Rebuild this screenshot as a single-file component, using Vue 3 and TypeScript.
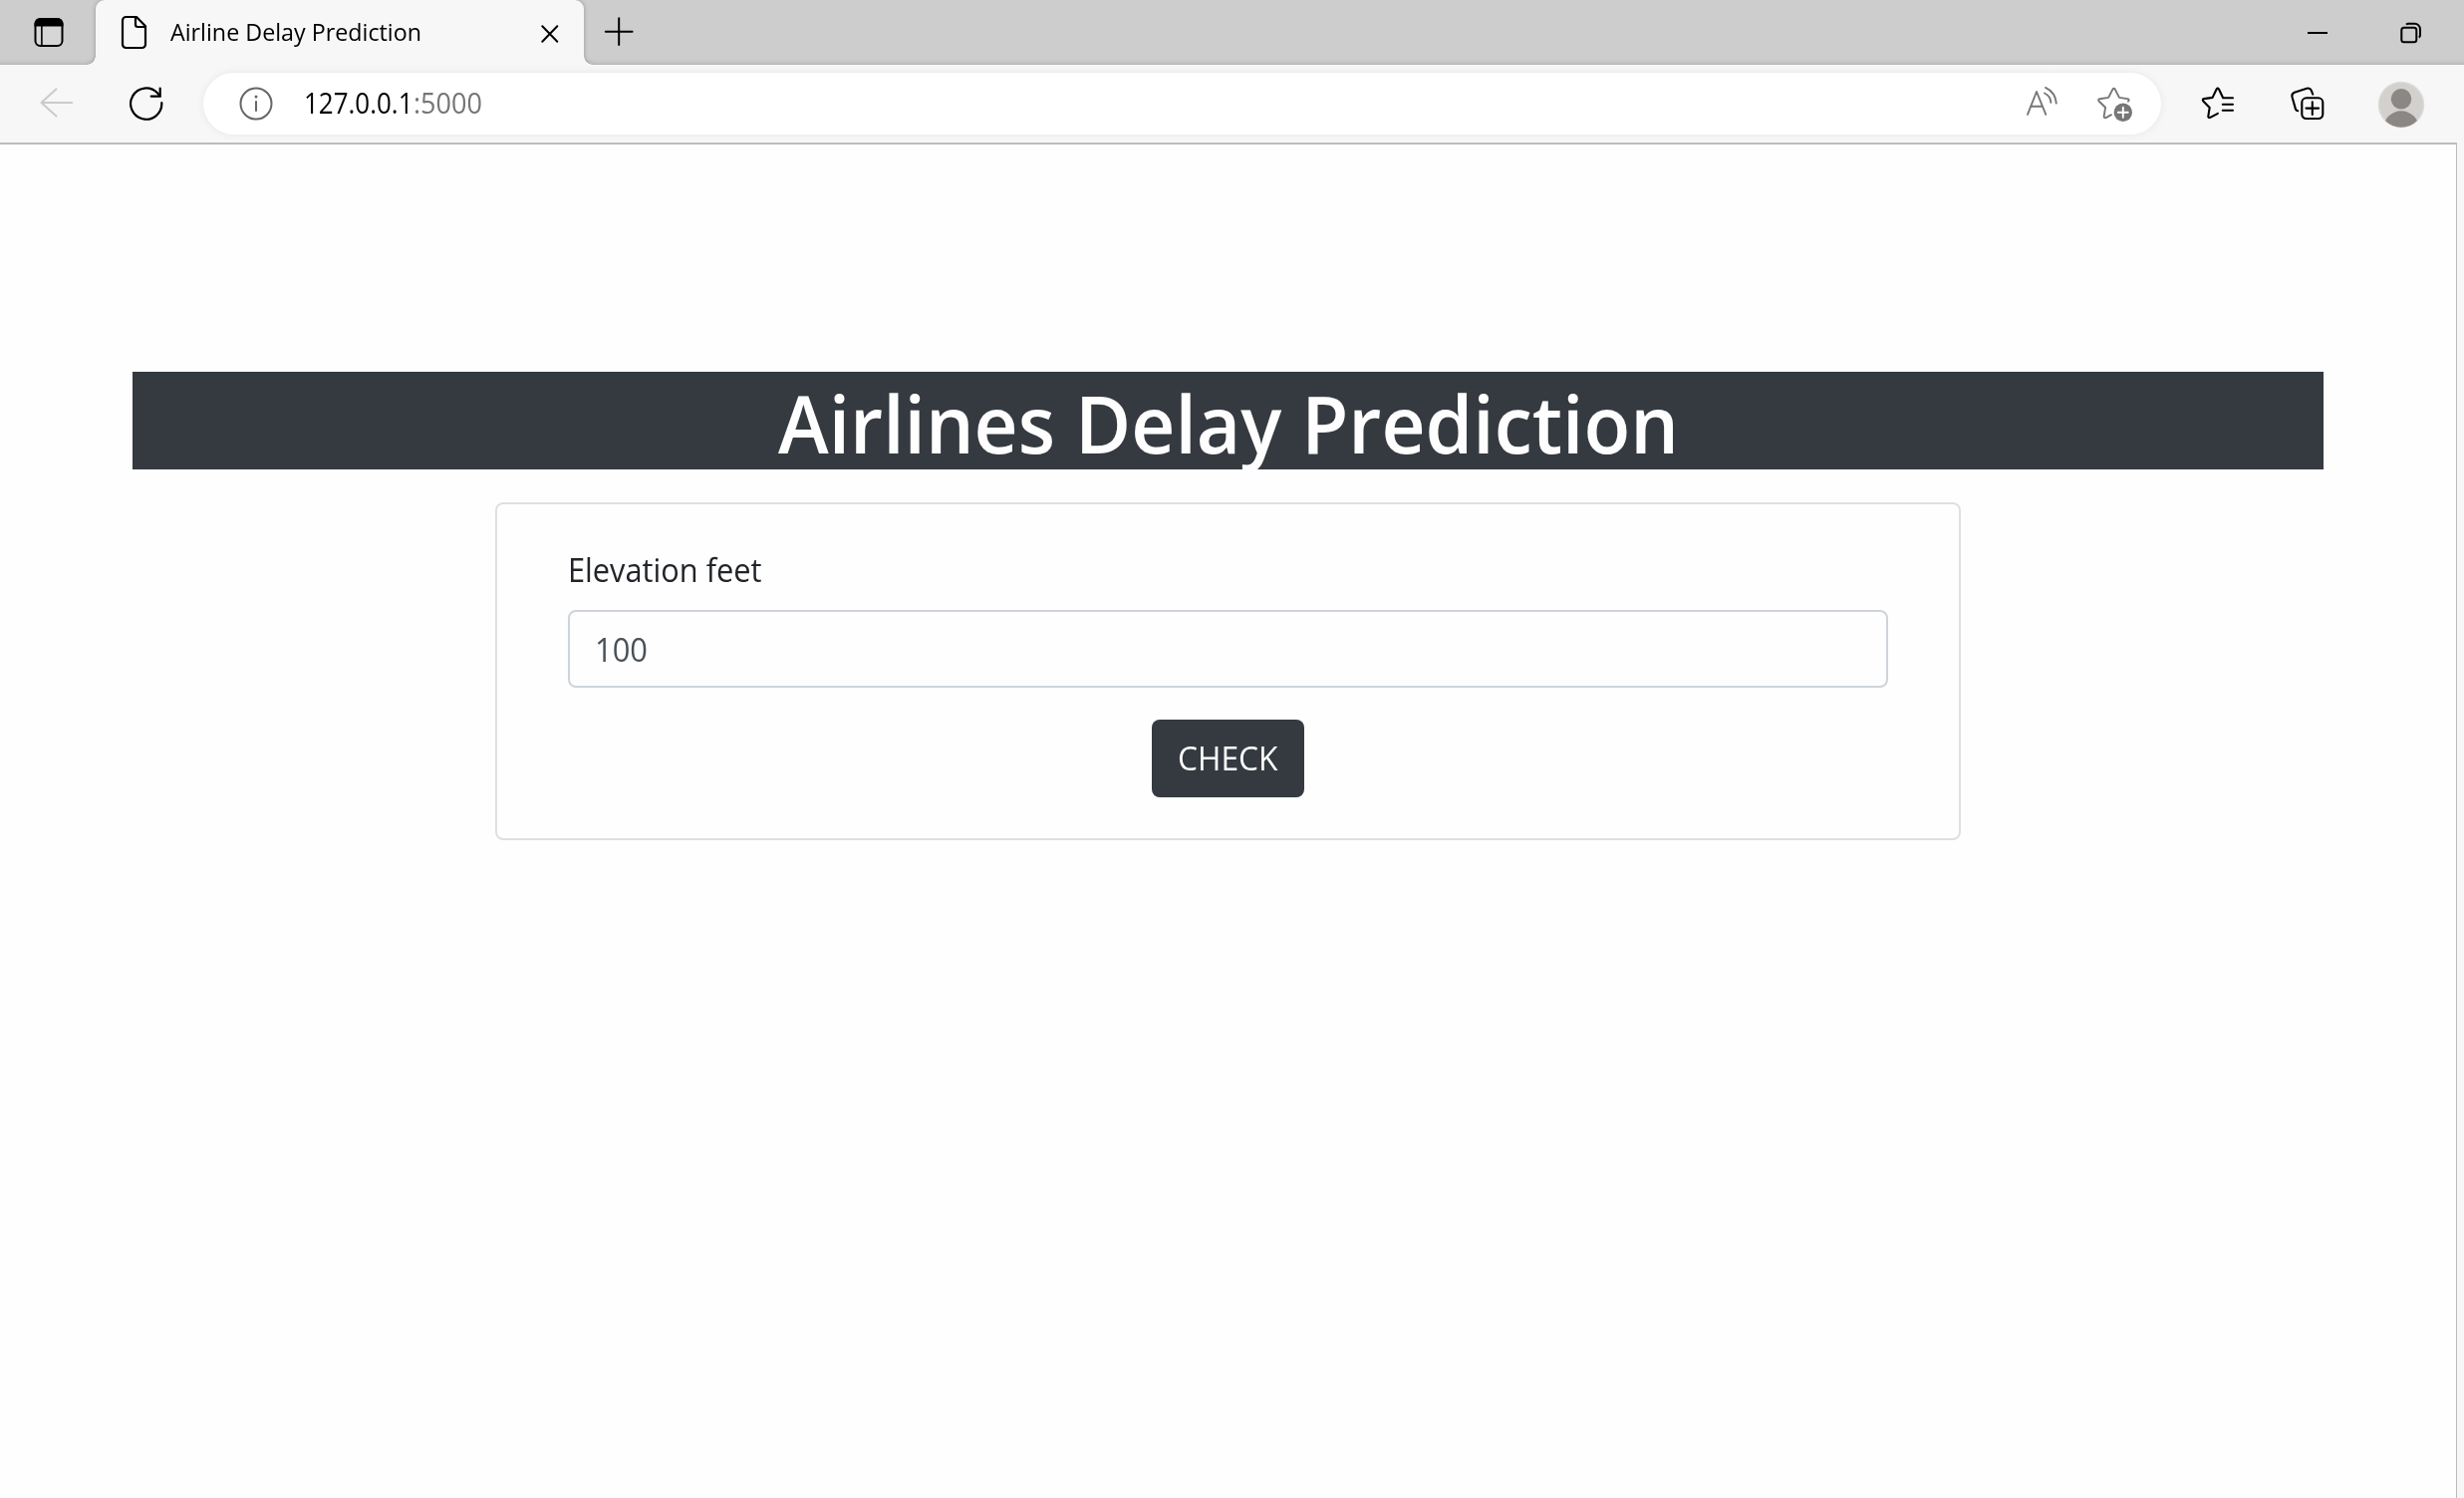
<script setup lang="ts">
import { ref } from 'vue'

const tabTitle = 'Airline Delay Prediction'
const host = '127.0.0.1'
const port = ':5000'
const elevation = ref('100')

// Condenses a run of text horizontally so that it takes up the given width.
const vFit = {
  mounted(el: HTMLElement, binding: { value: number }) {
    const natural = el.getBoundingClientRect().width
    el.style.transform = `scaleX(${binding.value / natural})`
    el.style.marginRight = `${binding.value - natural}px`
  },
}
</script>

<template>
  <div class="browser">
    <header class="strip">
      <svg class="i-workspace" width="32" height="32" viewBox="33 16 32 32" fill="none" stroke="#000" stroke-width="2">
        <rect x="35.500" y="19" width="27" height="27" rx="5" fill="#d6d6d6" />
        <path d="M35.500 25.500v-2a5 5 0 0 1 5-4.500h17a5 5 0 0 1 5 4.500v2z" fill="#000" />
        <path d="M41.900 26v20" stroke-width="1.600" />
      </svg>
      <div class="tab">
        <svg class="i-doc" width="28" height="36" viewBox="120 15 28 36" fill="none" stroke="#000" stroke-width="2.200" stroke-linejoin="round">
          <path d="M126.500 17h10.500l9 9.200v18.300a3.500 3.500 0 0 1-3.500 3.500h-16a3.500 3.500 0 0 1-3.500-3.500v-24a3.500 3.500 0 0 1 3.500-3.500z" />
          <path d="M136 17.500v7.300a2.200 2.200 0 0 0 2.200 2.200H145.500" />
        </svg>
        <span class="tab-title"><span v-fit="252" class="run">{{ tabTitle }}</span></span>
        <svg class="i-close" width="20" height="20" viewBox="542 23.700 20 20" fill="none" stroke="#000" stroke-width="2" stroke-linecap="round">
          <path d="M544.300 26l15 15.500M559.300 26l-15 15.500" />
        </svg>
      </div>
      <svg class="i-plus" width="30" height="30" viewBox="606 17 30 30" fill="none" stroke="#000" stroke-width="2" stroke-linecap="round">
        <path d="M607.800 31.700h26.800M621.200 18.300v26.800" />
      </svg>
      <svg class="i-min" width="22" height="22" viewBox="2315 22 22 22" fill="none" stroke="#000" stroke-width="2">
        <path d="M2316 33h20" />
      </svg>
      <svg class="i-restore" width="24" height="24" viewBox="2408 21 24 24" fill="none" stroke="#000" stroke-width="2">
        <rect x="2410.300" y="27.800" width="15" height="14.400" rx="2.500" />
        <path d="M2415 24.600q.8-.800 2-.800h6.500a5.500 5.500 0 0 1 5.500 5.500v6q0 1.500-1.200 2.300" />
      </svg>
    </header>

    <nav class="toolbar">
      <svg class="i-back" width="36" height="32" viewBox="39 87 36 32" fill="none" stroke="#cbcbcb" stroke-width="2" stroke-linecap="round" stroke-linejoin="round">
        <path d="M72.300 103H41.500M56.500 89.300L41.500 103l15 13.500" />
      </svg>
      <svg class="i-reload" width="36" height="36" viewBox="129 86 36 36" fill="none" stroke="#000" stroke-width="2.200" stroke-linecap="round">
        <path d="M162.300 103.200a15.600 15.600 0 1 1-4.300-9.900L160.300 96" />
        <path d="M160.700 88.500V96.700h-9" stroke-linejoin="miter" />
      </svg>
      <div class="address">
        <svg class="i-info" width="36" height="36" viewBox="239 85.500 36 36" fill="none" stroke="#666" stroke-width="2">
          <circle cx="257" cy="103.500" r="15.500" />
          <path d="M257 100.800v10.500" stroke-width="2" />
          <circle cx="257" cy="96.500" r="1.500" fill="#666" stroke="none" />
        </svg>
        <span class="url"><span v-fit="109.500" class="run">{{ host }}</span><span v-fit="69" class="run port">{{ port }}</span></span>
        <svg class="i-read" width="36" height="36" viewBox="2032 84 36 36" fill="none" stroke="#767676" stroke-width="1.900" stroke-linecap="round" stroke-linejoin="round">
          <path d="M2035 114.800l9-22.800 9.300 22.800M2038 106.800h12" />
          <path d="M2052 93.500q5.800 2.500 6.400 9.400M2053 87.900q10 4.800 10.800 15.700" />
        </svg>
        <svg class="i-addfav" width="38" height="38" viewBox="2104 85 38 38" fill="none" stroke="#767676" stroke-width="1.900" stroke-linecap="round" stroke-linejoin="round">
          <path d="M2136 101.700q1.800-2-.8-2.600l-8.200-1.200-4.200-8.300q-1.200-1.700-2.400 0l-4.200 8.300-8.900 1.300q-2 .7-.7 2.300l6.500 6.300-1.500 9q0 1.800 2 1.300l5.400-2.900" />
          <circle cx="2130.800" cy="112.700" r="9.200" fill="#767676" stroke="none" />
          <path d="M2130.800 107.700v10M2125.800 112.700h10" stroke="#fff" />
        </svg>
      </div>
      <svg class="i-fav" width="36" height="36" viewBox="2208 86 36 36" fill="none" stroke="#000" stroke-width="2.100" stroke-linecap="round" stroke-linejoin="round">
        <path d="M2241 98.300h-9.800l-4.200-8.800q-1.200-1.800-2.400 0l-4 8.400-8.600 1.200q-2 .6-.7 2.300l6.400 6.500-1.400 8.800q0 1.800 2 1.200l7.600-4.100" />
        <path d="M2230.800 104.700h10.200M2230.800 110.800h10.200" />
      </svg>
      <svg class="i-coll" width="38" height="38" viewBox="2297 85 38 38" fill="none" stroke="#000" stroke-width="2.100" stroke-linecap="round">
        <path d="M2306.300 111.200q-1.800 0-2.500-2.300l-3.300-11.600q-.8-3.500 2.300-4.600l12.300-3.900q3.300-1 4.700 2l1.500 3.800" />
        <rect x="2310.300" y="98.300" width="21" height="20.700" rx="4.500" />
        <path d="M2314.500 108.600h12.600M2320.800 102.300v12.600" />
      </svg>
      <svg class="i-user" width="48" height="48" viewBox="2385.500 80.500 48 48">
        <defs><clipPath id="face"><circle cx="2409.500" cy="104.500" r="22.700" /></clipPath></defs>
        <circle cx="2409.500" cy="104.500" r="23.300" fill="#dedddb" />
        <circle cx="2409.500" cy="104.500" r="22" fill="#d2d1cd" />
        <g clip-path="url(#face)" fill="#8b8785">
          <circle cx="2409.500" cy="98.700" r="10.300" />
          <circle cx="2409.500" cy="128.800" r="18" />
        </g>
      </svg>
    </nav>

    <main class="page">
      <h1 class="banner"><span v-fit="904" class="run">Airlines Delay Prediction</span></h1>
      <form class="card" @submit.prevent>
        <label class="label" for="elevation"><span v-fit="194.500" class="run">Elevation feet</span></label>
        <div id="elevation" class="field"><span v-fit="53" class="run">{{ elevation }}</span></div>
        <button class="check" type="submit"><span v-fit="100.500" class="run">CHECK</span></button>
      </form>
    </main>
  </div>
</template>

<style>
html,
body {
  margin: 0;
  background: #f7f7f7;
  overflow: hidden;
}
</style>

<style scoped>
.browser {
  display: flex;
  flex-direction: column;
  width: 2473px;
  height: 1503px;
  background: #f7f7f7;
  font-family: "Open Sans", "Noto Sans", sans-serif;
  color: #000;
}
svg {
  display: block;
  flex: none;
}
.run {
  display: inline-block;
  white-space: nowrap;
  transform-origin: 0 50%;
}
.strip {
  display: flex;
  height: 65px;
  overflow: hidden;
  background: linear-gradient(to top, #b6b6b6 0, #c5c5c5 2px, #cdcdcd 6px);
}
.i-workspace { margin: 16px 31px 0 33px; }
.tab {
  position: relative;
  display: flex;
  flex: none;
  width: 490px;
  height: 65px;
  background: #f7f7f7;
  border-radius: 9px 9px 0 0;
  filter: drop-shadow(0 0 2px rgba(0, 0, 0, 0.28));
}
.tab::before,
.tab::after {
  content: "";
  position: absolute;
  bottom: 0;
  width: 9px;
  height: 9px;
}
.tab::before {
  left: -9px;
  background: radial-gradient(circle at 0 0, transparent 8.500px, #f7f7f7 9px);
}
.tab::after {
  right: -9px;
  background: radial-gradient(circle at 100% 0, transparent 8.500px, #f7f7f7 9px);
}
.i-doc { margin: 15px 0 0 24px; }
.tab-title {
  width: 371px;
  margin-left: 23px;
  font-size: 23.500px;
  line-height: 65px;
}
.i-close { margin-top: 24px; }
.i-plus { margin: 17px 0 0 20px; }
.i-min { margin: 22px 71px 0 auto; }
.i-restore { margin: 21px 41px 0 0; }

.toolbar {
  display: flex;
  height: 78px;
  border-bottom: 2px solid #bcbcbc;
  margin-right: 7px;
}
.i-back { margin: 22px 0 0 39px; }
.i-reload { margin: 21px 0 0 54px; }
.address {
  display: flex;
  flex: none;
  width: 1965px;
  height: 62px;
  margin: 8px 0 0 39px;
  border-radius: 31px;
  background: #fff;
  box-shadow: 0 0 9px rgba(0, 0, 0, 0.07);
}
.i-info { margin: 13px 0 0 35px; }
.url {
  margin: 0 auto 0 30px;
  font-size: 29px;
  line-height: 60px;
}
.port { color: #767676; }
.i-read { margin-top: 11px; }
.i-addfav { margin: 12px 27px 0 36px; }
.i-fav { margin: 21px 0 0 39px; }
.i-coll { margin: 20px 0 0 53px; }
.i-user { margin: 15.500px 0 0 50.500px; }

.page {
  display: flex;
  flex: 1;
  flex-direction: column;
  align-items: center;
  width: 2465px;
  background: #fefefe;
  border-right: 1px solid #bcbcbc;
}
.banner {
  width: 2199px;
  height: 98px;
  margin: 228px 0 33px;
  padding-left: 1px;
  box-sizing: border-box;
  background: #343a40;
  color: #fefefe;
  font-size: 80px;
  font-weight: 600;
  line-height: 102px;
  text-align: center;
}
.card {
  display: flex;
  flex-direction: column;
  align-items: center;
  box-sizing: border-box;
  width: 1471px;
  height: 339px;
  padding: 40px 71px 0;
  border: 2px solid #dfdfdf;
  border-radius: 8px;
  font-size: 33.600px;
}
.label {
  align-self: stretch;
  height: 66px;
  line-height: 50px;
  color: #212529;
}
.field {
  align-self: stretch;
  box-sizing: border-box;
  height: 78px;
  padding-left: 25px;
  border: 2px solid #ced4da;
  border-radius: 8px;
  color: #495057;
  line-height: 74px;
}
.check {
  width: 153px;
  height: 78px;
  margin: 32px 0 0;
  padding: 0 0 2px;
  border: 0;
  border-radius: 8px;
  background: #343a40;
  color: #fff;
  font: inherit;
  line-height: 76px;
}
</style>
